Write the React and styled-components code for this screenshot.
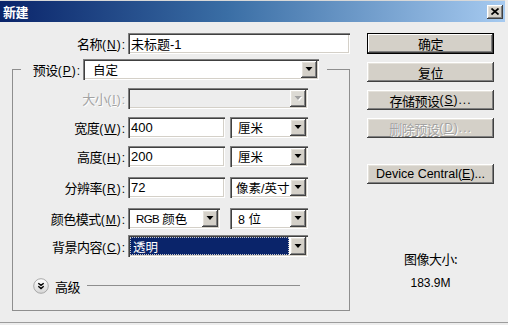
import React from "react";
import styled, { createGlobalStyle } from "styled-components";

const Global = createGlobalStyle`
  html, body { margin: 0; padding: 0; background: #ededed; }
  body { font-family: "Liberation Sans", "Noto Sans CJK SC", sans-serif; font-size: 12px; color: #000; }
  * { box-sizing: border-box; }
`;

const sunken = `
  box-shadow: inset 1px 1px #808080, inset 2px 2px #404040, inset -1px -1px #ffffff, inset -2px -2px #d4d0c8;
`;
const raised = `
  box-shadow: inset -1px -1px #404040, inset 1px 1px #ffffff, inset -2px -2px #808080, inset 2px 2px #e4e1da;
`;

const Window = styled.div`
  width: 508px;
  height: 323px;
  background: #ededed;
  border-bottom: 1px solid #9c9c9c;
  overflow: hidden;
`;

const TitleBar = styled.div`
  height: 22px;
  margin-right: 3px;
  border-top: 1px solid #d8d8d8;
  background: linear-gradient(to right, #0a246a 0%, #3a6ea5 45%, #a6caf0 100%);
  display: flex;
  align-items: center;
  justify-content: space-between;
  padding: 0 2px 0 3px;
`;

const Title = styled.span`
  color: #fff;
  font-family: "Noto Sans CJK SC", sans-serif;
  font-weight: bold;
  font-size: 13px;
  letter-spacing: -0.5px;
  line-height: 14px;
`;

const CloseBtn = styled.div`
  width: 16px;
  height: 14px;
  background: #d4d0c8;
  ${raised}
  display: flex;
  align-items: center;
  justify-content: center;
`;

const Body = styled.div`
  display: flex;
  padding: 11px 0 0 12px;
`;

const LeftCol = styled.div`
  width: 338px;
  display: flex;
  flex-direction: column;
`;

const RightCol = styled.div`
  width: 127px;
  margin-left: 17px;
  display: flex;
  flex-direction: column;
`;

const Row = styled.div`
  display: flex;
  align-items: center;
  height: ${(p) => p.$h || 21}px;
  margin-top: ${(p) => p.$top || 0}px;
`;

const Label = styled.span`
  width: ${(p) => p.$w}px;
  margin-right: 2px;
  text-align: right;
  white-space: nowrap;
  color: ${(p) => (p.$disabled ? "#a3a3a3" : "#000")};
  ${(p) => (p.$disabled ? "text-shadow: 1px 1px 0 #fff;" : "")}
  font-family: "Noto Sans CJK SC", sans-serif;
  font-size: 13px;
  letter-spacing: -0.5px;
`;

const Mnemonic = styled.span`
  font-family: "Liberation Sans", sans-serif;
  font-size: 12px;
  letter-spacing: 1px;
`;

const Input = styled.div`
  width: ${(p) => p.$w}px;
  height: ${(p) => p.$h || 21}px;
  background: #fff;
  ${sunken}
  display: flex;
  align-items: center;
  padding-left: 3px;
  font-family: "Liberation Sans", "Noto Sans CJK SC", sans-serif;
  font-size: 13px;
  white-space: nowrap;
`;

const ComboFrame = styled.div`
  width: ${(p) => p.$w}px;
  height: ${(p) => p.$h || 21}px;
  margin-left: ${(p) => p.$ml || 0}px;
  padding: 2px;
  background: ${(p) => (p.$disabled ? "#ededed" : "#fff")};
  ${sunken}
  display: flex;
  align-items: stretch;
`;

const ComboText = styled.div`
  flex: 1;
  display: flex;
  align-items: center;
  white-space: nowrap;
  overflow: hidden;
  font-family: "Liberation Sans", "Noto Sans CJK SC", sans-serif;
  font-size: 12.5px;
  padding-left: ${(p) => (p.$selected ? 3 : p.$pad ?? 5)}px;
  ${(p) =>
    p.$selected
      ? `background: #0a246a; color: #fff; outline: 1px dotted #c8c8c8; outline-offset: -1px; margin: 0 1px 0 0;`
      : ""}
`;

const Narrow = styled.span`
  font-size: 11.5px;
  letter-spacing: -0.6px;
  margin-right: 3px;
`;

const DropBtn = styled.div`
  width: 16px;
  background: ${(p) => (p.$disabled ? "#dcdad4" : "#d4d0c8")};
  ${raised}
  display: flex;
  align-items: center;
  justify-content: center;
`;

const Group = styled.fieldset`
  margin: 5px 0 0 0;
  padding: 0;
  min-width: 0;
  width: 338px;
  height: 252px;
  border: 1px solid #8e8e8e;
  display: flex;
  flex-direction: column;
`;

const Legend = styled.legend`
  margin-left: 8px;
  padding: 0 8px 0 0;
  display: flex;
  align-items: center;
  height: 21px;
`;

const AdvRow = styled.div`
  display: flex;
  align-items: center;
  margin: 21px 0 0 20px;
  height: 16px;
`;

const AdvText = styled.span`
  font-family: "Noto Sans CJK SC", sans-serif;
  font-size: 13px;
  letter-spacing: -0.5px;
  margin-left: 6px;
`;

const AdvLine = styled.div`
  width: 213px;
  height: 1px;
  background: #8e8e8e;
  margin-left: 7px;
  margin-top: -2px;
`;

const Button = styled.div`
  height: ${(p) => (p.$default ? 21 : 20)}px;
  margin-top: ${(p) => p.$top || 0}px;
  background: #d4d0c8;
  ${(p) =>
    p.$default
      ? `border: 1px solid #000; box-shadow: inset -1px -1px #404040, inset 1px 1px #ffffff, inset -2px -2px #808080;`
      : raised}
  display: flex;
  align-items: center;
  justify-content: center;
  white-space: nowrap;
  font-family: "Noto Sans CJK SC", sans-serif;
  font-size: 13px;
  letter-spacing: -0.5px;
  color: ${(p) => (p.$disabled ? "#a3a3a3" : "#000")};
  ${(p) => (p.$disabled ? "text-shadow: 1px 1px 0 #fff;" : "")}
`;

const LatinButtonText = styled.span`
  font-family: "Liberation Sans", sans-serif;
  font-size: 12.5px;
  letter-spacing: 0;
`;

const SizeInfo = styled.div`
  margin-top: ${(p) => p.$top || 0}px;
  text-align: center;
  line-height: 16px;
  font-family: ${(p) => (p.$latin ? '"Liberation Sans", sans-serif' : '"Noto Sans CJK SC", sans-serif')};
  font-size: ${(p) => (p.$latin ? 12 : 13)}px;
  letter-spacing: ${(p) => (p.$latin ? 0 : -0.5)}px;
`;

const Arrow = ({ disabled }) => (
  <svg width="8" height="5" viewBox="0 0 8 5" overflow="visible">
    {disabled && <polygon points="1.5,1 8.5,1 5,5" fill="#fff" />}
    <polygon points="0.5,0 7.5,0 4,4" fill={disabled ? "#a0a0a0" : "#000"} />
  </svg>
);

const Combo = ({ w, h, ml, children, disabled, selected, pad }) => (
  <ComboFrame $w={w} $h={h} $ml={ml} $disabled={disabled}>
    <ComboText $selected={selected} $pad={pad}>{children}</ComboText>
    <DropBtn $disabled={disabled}>
      <Arrow disabled={disabled} />
    </DropBtn>
  </ComboFrame>
);

const Mn = ({ children, tail = ":" }) => (
  <Mnemonic>
    (<u>{children}</u>){tail}
  </Mnemonic>
);

export default function App() {
  return (
    <>
      <Global />
      <Window>
        <TitleBar>
          <Title>新建</Title>
          <CloseBtn>
            <svg width="8" height="7" viewBox="0 0 8 7">
              <path d="M0.5 0.5 L7.5 6.5 M7.5 0.5 L0.5 6.5" stroke="#000" strokeWidth="1.7" />
            </svg>
          </CloseBtn>
        </TitleBar>
        <Body>
          <LeftCol>
            <Row>
              <Label $w={114}>
                名称<Mn>N</Mn>
              </Label>
              <Input $w={222}>未标题-1</Input>
            </Row>
            <Group>
              <Legend>
                <Label $w={60}>
                  预设<Mn>P</Mn>
                </Label>
                <Combo w={236} pad={8}>自定</Combo>
              </Legend>
              <Row $top={8}>
                <Label $w={113} $disabled>
                  大小<Mn>I</Mn>
                </Label>
                <Combo w={180} disabled></Combo>
              </Row>
              <Row $top={8}>
                <Label $w={113}>
                  宽度<Mn>W</Mn>
                </Label>
                <Input $w={97}>400</Input>
                <Combo w={78} ml={5} pad={6}>厘米</Combo>
              </Row>
              <Row $top={8}>
                <Label $w={113}>
                  高度<Mn>H</Mn>
                </Label>
                <Input $w={97}>200</Input>
                <Combo w={78} ml={5} pad={6}>厘米</Combo>
              </Row>
              <Row $top={10}>
                <Label $w={113}>
                  分辨率<Mn>R</Mn>
                </Label>
                <Input $w={97}>72</Input>
                <Combo w={78} ml={5} pad={4}>像素/英寸</Combo>
              </Row>
              <Row $top={10}>
                <Label $w={113}>
                  颜色模式<Mn>M</Mn>
                </Label>
                <Combo w={92} pad={6}>
                  <Narrow>RGB</Narrow>颜色
                </Combo>
                <Combo w={78} ml={10} pad={6}>8 位</Combo>
              </Row>
              <Row $top={6} $h={22}>
                <Label $w={113}>
                  背景内容<Mn>C</Mn>
                </Label>
                <Combo w={180} h={22} selected>透明</Combo>
              </Row>
              <AdvRow>
                <svg width="16" height="16" viewBox="0 0 16 16">
                  <defs>
                    <linearGradient id="advg" x1="0" y1="0" x2="0" y2="1">
                      <stop offset="0" stopColor="#ffffff" />
                      <stop offset="1" stopColor="#d6d6d6" />
                    </linearGradient>
                  </defs>
                  <circle cx="8" cy="8" r="7.3" fill="url(#advg)" stroke="#a8a8a8" strokeWidth="1" />
                  <path d="M5.3 5.2 L8 7.4 L10.7 5.2 M5.3 8.3 L8 10.5 L10.7 8.3" stroke="#000" strokeWidth="1.4" fill="none" />
                </svg>
                <AdvText>高级</AdvText>
                <AdvLine />
              </AdvRow>
            </Group>
          </LeftCol>
          <RightCol>
            <Button $default>确定</Button>
            <Button $top={8}>复位</Button>
            <Button $top={8}>
              存储预设<Mn tail="...">S</Mn>
            </Button>
            <Button $top={8} $disabled>
              删除预设<Mn tail="...">D</Mn>
            </Button>
            <Button $top={26}>
              <LatinButtonText>
                Device Central(<u>E</u>)...
              </LatinButtonText>
            </Button>
            <SizeInfo $top={67}>图像大小:</SizeInfo>
            <SizeInfo $top={8} $latin>
              183.9M
            </SizeInfo>
          </RightCol>
        </Body>
      </Window>
    </>
  );
}
